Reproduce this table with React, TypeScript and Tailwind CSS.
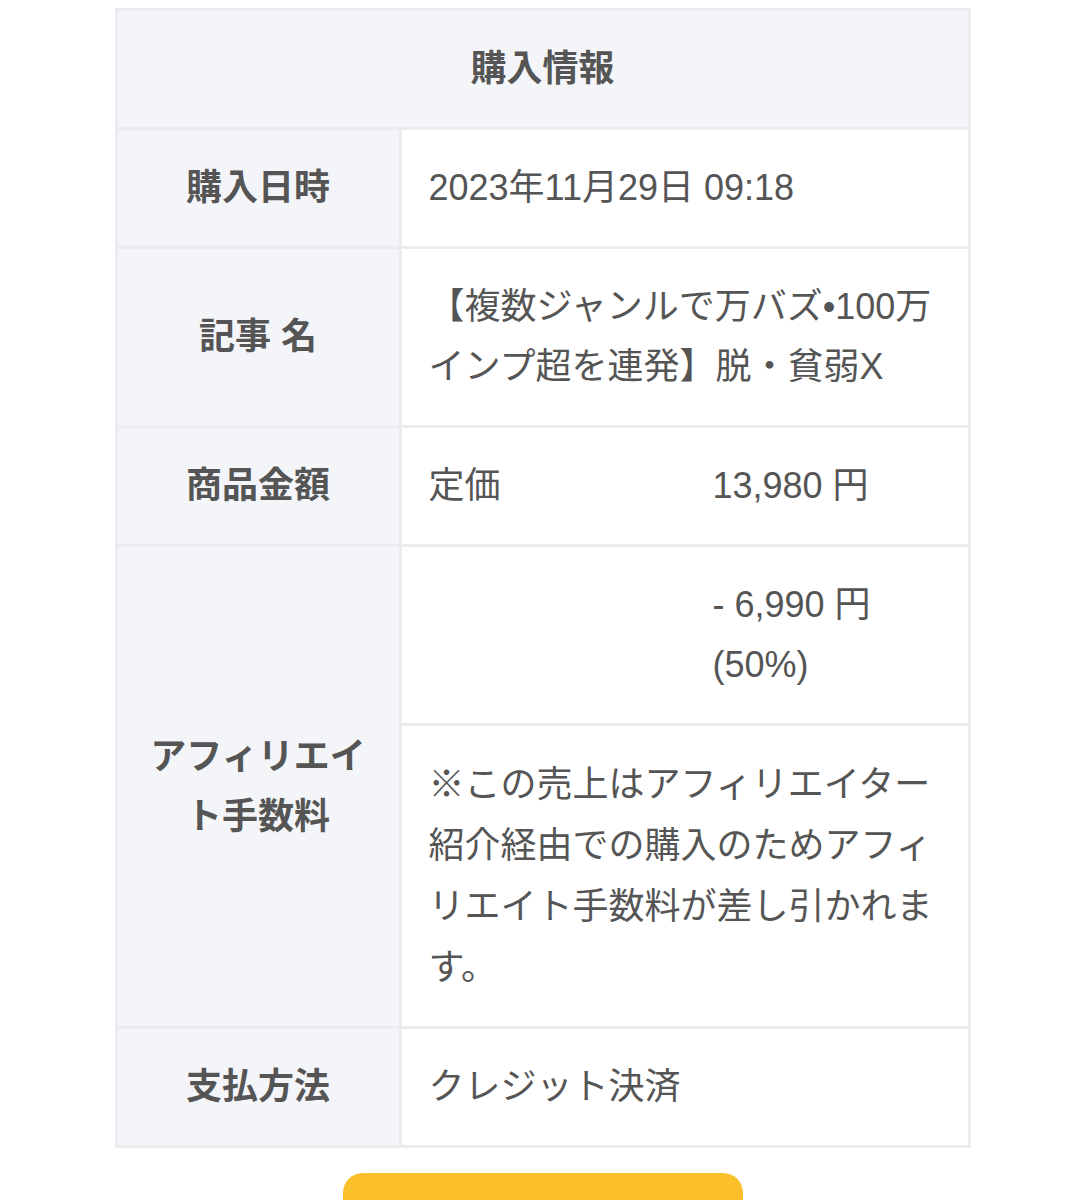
const font = {
  fontFamily: '"Liberation Sans", "Noto Sans CJK JP", sans-serif',
}

function Label({ children, rowSpan }: { children: React.ReactNode; rowSpan?: number }) {
  return (
    <th
      rowSpan={rowSpan}
      className="border-[3px] border-[#ebecf0] bg-[#f4f5f9] px-[24px] py-[28px] text-center align-middle text-[36px] font-bold leading-[60px] text-[#555555]"
    >
      {children}
    </th>
  )
}

function Value({ children, tall }: { children: React.ReactNode; tall?: boolean }) {
  return (
    <td
      className={
        tall
          ? "border-[3px] border-[#ebecf0] bg-white py-[28px] pl-[27px] pr-[16px] text-left align-middle text-[36px] font-normal leading-[61px] text-[#555555]"
          : "border-[3px] border-[#ebecf0] bg-white py-[28px] pl-[27px] pr-[16px] text-left align-middle text-[36px] font-normal leading-[60px] text-[#555555]"
      }
    >
      {children}
    </td>
  )
}

export default function App() {
  return (
    <div className="min-h-screen bg-white pt-[8px]" style={font}>
      <table className="mx-auto w-[856px] table-fixed border-collapse border-[3px] border-[#ebecf0]">
        <colgroup>
          <col className="w-[284px]" />
          <col />
        </colgroup>
        <tbody>
          <tr>
            <th
              colSpan={2}
              className="border-[3px] border-[#ebecf0] bg-[#f4f5f9] py-[28px] text-center text-[36px] font-bold leading-[60px] text-[#555555]"
            >
              購入情報
            </th>
          </tr>
          <tr>
            <Label>購入日時</Label>
            <Value>2023年11月29日 09:18</Value>
          </tr>
          <tr>
            <Label>記事 名</Label>
            <Value>
              【複数ジャンルで万バズ•100万
              <br />
              インプ超を連発】脱・貧弱X
            </Value>
          </tr>
          <tr>
            <Label>商品金額</Label>
            <Value>
              <div className="flex">
                <span className="w-[284px] shrink-0">定価</span>
                <span>13,980 円</span>
              </div>
            </Value>
          </tr>
          <tr>
            <Label rowSpan={2}>
              アフィリエイ
              <br />
              ト手数料
            </Label>
            <Value>
              <div className="flex">
                <span className="w-[284px] shrink-0"></span>
                <span>
                  - 6,990 円
                  <br />
                  (50%)
                </span>
              </div>
            </Value>
          </tr>
          <tr>
            <Value tall>
              ※この売上はアフィリエイター
              <br />
              紹介経由での購入のためアフィ
              <br />
              リエイト手数料が差し引かれま
              <br />
              す。
            </Value>
          </tr>
          <tr>
            <Label>支払方法</Label>
            <Value>クレジット決済</Value>
          </tr>
        </tbody>
      </table>
      <div className="mx-auto mt-[25px] h-[60px] w-[400px] rounded-[20px] bg-[#fbbf2b]" />
    </div>
  )
}
